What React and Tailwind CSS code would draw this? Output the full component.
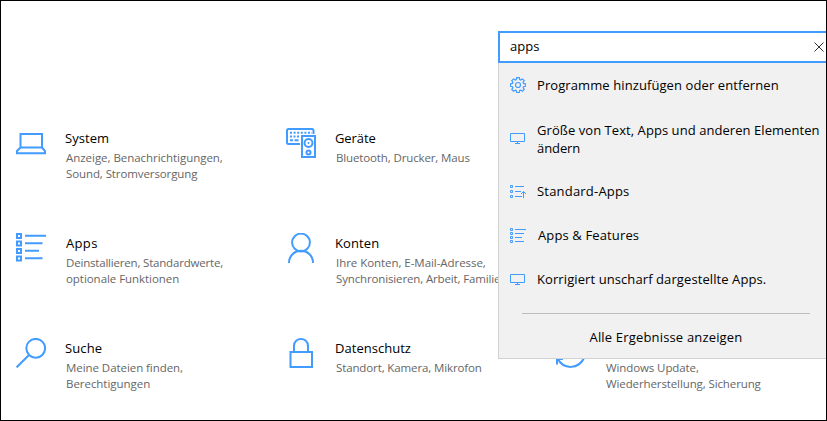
import React from "react";

const Svg = ({ w, h, className = "", children, sw = 2 }) => (
  <svg width={w} height={h} viewBox={`0 0 ${w} ${h}`} fill="none" stroke="#429cff" strokeWidth={sw} className={`block shrink-0 ${className}`}>
    {children}
  </svg>
);

const Laptop = () => (
  <Svg w={30} h={30}>
    <path d="M4.500 6h21.500v13.500H4.500zM4.500 19.500L1 23V25.300h28V23L26 19.500" />
  </Svg>
);

const Devices = () => (
  <Svg w={30} h={30}>
    <path d="M14 16H2.500Q1 16 1 14.500V2.500Q1 1 2.500 1H26Q27.500 1 27.500 2.500V6" />
    <path d="M4 4.700h22" strokeDasharray="2 1.600" />
    <path d="M4 8.500h2M7.500 8.500h2M11 8.500h2M4 12.200h3M8.500 12.200h4" />
    <rect x="16" y="8" width="13" height="21" />
    <circle cx="22.500" cy="15" r="4" />
    <circle cx="22.500" cy="15" r="1" fill="#429cff" stroke="none" />
    <circle cx="22.500" cy="24.500" r="2" />
  </Svg>
);

const AppList = () => (
  <Svg w={30} h={30}>
    <path d="M1 1h4v4h-4zM1 8.500h4v4h-4zM1 16h4v4h-4zM1 23.500h4v4h-4z" />
    <path d="M9 2.800h21M9 10.300h17.500M9 17.800h14M9 25.300h17.500" />
  </Svg>
);

const Person = () => (
  <Svg w={30} h={30}>
    <circle cx="15" cy="9.500" r="8.900" />
    <path d="M3 30C3 13.800 27 13.800 27 30" />
  </Svg>
);

const Magnifier = () => (
  <Svg w={30} h={30}>
    <circle cx="19.700" cy="10.300" r="9.400" />
    <path d="M13 17L.6 29.400" />
  </Svg>
);

const Lock = () => (
  <Svg w={30} h={30}>
    <path d="M4.500 14h21.500v15H4.500zM8 14V8C8-1.300 22-1.300 22 8v6" />
  </Svg>
);

const Sync = () => (
  <Svg w={30} h={30}>
    <path d="M1 15.500C1 7 7 1 15 1C20 1 25 4 27.500 8.500M29 1v8h-8M1.500 20C7 32 23 32 28.500 19M1 26.500V21h6" />
  </Svg>
);

const Gear = () => (
  <Svg w={16} h={16} sw={1.200}>
    <path d="M6.700.6h2.600l.4 2 1 .4 1.700-1.100 1.800 1.800-1.100 1.700.4 1 2 .4v2.500l-2 .4-.4 1 1.100 1.700-1.800 1.800-1.700-1.100-1 .4-.4 2H6.700l-.4-2-1-.4-1.700 1.100-1.800-1.800 1.100-1.700-.4-1-2-.4V6.800l2-.4.4-1-1.100-1.700 1.800-1.800L5.300 3l1-.4z" />
    <circle cx="8" cy="8" r="2.500" />
  </Svg>
);

const Monitor = () => (
  <Svg w={16} h={16} sw={1}>
    <path d="M.5 3.500h14v8H.5zM7.500 11.500v2.500M5 13.500h5" />
  </Svg>
);

const SmallList = () => (
  <Svg w={16} h={16} sw={1}>
    <path d="M.5 1.500h2v2h-2zM.5 5.500h2v2h-2zM.5 9.500h2v2h-2zM.5 13.500h2v2h-2zM5 2.500h11M5 6.500h9M5 10.500h7M5 14.500h9" />
  </Svg>
);

const SortedList = () => (
  <Svg w={16} h={16} sw={1}>
    <path d="M.5 2.500h2v2h-2zM.5 7.500h2v2h-2zM.5 12.500h2v2h-2zM5 3.500h9M5 8.500h6M5 13.500h7M13.500 15V8.500M11 11l2.500-2.500 2.500 2.500" />
  </Svg>
);

const categories = [
  { Icon: Laptop, title: ["System", "tracking-[0.04px]"], lines: [["Anzeige, Benachrichtigungen,", "tracking-[-0.04px]"], ["Sound, Stromversorgung", "tracking-[-0.1px]"]] },
  { Icon: Devices, title: ["Geräte", "tracking-[-0.1px]"], lines: [["Bluetooth, Drucker, Maus", "tracking-[-0.13px]"]] },
  null,
  { Icon: AppList, title: ["Apps", "tracking-[0.35px] pl-px"], lines: [["Deinstallieren, Standardwerte,", "tracking-[-0.19px]"], ["optionale Funktionen", "tracking-[-0.05px]"]] },
  { Icon: Person, title: ["Konten", "tracking-[0.1px]"], lines: [["Ihre Konten, E-Mail-Adresse,", "tracking-[-0.05px]"], ["Synchronisieren, Arbeit, Familie", "tracking-[-0.14px]"]] },
  null,
  { Icon: Magnifier, title: ["Suche", "tracking-[0.1px]"], lines: [["Meine Dateien finden,", "tracking-[-0.06px]"], ["Berechtigungen", "tracking-[-0.04px]"]] },
  { Icon: Lock, title: ["Datenschutz", "tracking-[0.03px]"], lines: [["Standort, Kamera, Mikrofon", "tracking-[-0.12px]"]] },
  { Icon: Sync, title: ["", ""], lines: [["Windows Update,", "tracking-[-0.1px]"], ["Wiederherstellung, Sicherung", "tracking-[-0.11px]"]] },
];

const Category = ({ Icon, title, lines }) => (
  <div className="flex">
    <Icon />
    <div className="ml-[19px] whitespace-nowrap">
      <div className={`mb-0.5 h-5 text-[13px] leading-5 text-black ${title[1]}`}>{title[0]}</div>
      {lines.map(([text, tracking]) => (
        <div key={text} className={`pl-px text-[11.5px] leading-4 text-[#666] ${tracking}`}>{text}</div>
      ))}
    </div>
  </div>
);

const results = [
  { Icon: Gear, height: "h-[44px]", lines: [["Programme hinzufügen oder entfernen", "tracking-[0.09px]"]] },
  { Icon: Monitor, height: "h-[62px]", lines: [["Größe von Text, Apps und anderen Elementen", "tracking-[0.06px]"], ["ändern", "tracking-[-0.09px]"]], offset: "pt-0.5" },
  { Icon: SortedList, height: "h-[44px]", lines: [["Standard-Apps", "tracking-[0.2px]"]] },
  { Icon: SmallList, height: "h-[44px]", lines: [["Apps & Features", "tracking-[0.13px] pl-px"]] },
  { Icon: Monitor, height: "h-[44px]", lines: [["Korrigiert unscharf dargestellte Apps.", "tracking-[0.09px]"]] },
];

export default function App() {
  return (
    <div className="relative h-[421px] w-[827px] overflow-hidden border border-black bg-white font-['Open_Sans',sans-serif]">
      <div className="grid grid-cols-[270px_270px_270px] auto-rows-[105px] pl-[15px] pt-[127px]">
        {categories.map((c, i) => (c ? <Category key={i} {...c} /> : <div key={i} />))}
      </div>

      <div className="absolute left-[497px] top-[30px] w-[328px]">
        <div className="flex h-8 items-center justify-between border-2 border-r-0 border-[#429cff] bg-white pl-[10px] pr-[2px]">
          <span className="text-[13px] text-black">apps</span>
          <svg width="10" height="10" viewBox="0 0 10 10" fill="none" stroke="#333" className="block">
            <path d="M.5.5l9 9M9.500.5l-9 9" />
          </svg>
        </div>
        <div className="h-[296px] border-b border-l border-[#d2d2d2] bg-[#f1f1f1] text-[13px] text-black">
          {results.map(({ Icon, height, lines, offset = "" }, i) => (
            <div key={i} className={`flex items-center pl-[11px] ${height}`}>
              <Icon />
              <div className={`ml-[11px] whitespace-nowrap leading-[18px] ${offset}`}>
                {lines.map(([text, tracking]) => (
                  <div key={text} className={tracking}>{text}</div>
                ))}
              </div>
            </div>
          ))}
          <div className="ml-[23px] mt-3 h-px w-[288px] bg-[#bdbdbd]" />
          <div className="mt-[14px] pl-[7px] text-center leading-[18px] tracking-[0.17px]">Alle Ergebnisse anzeigen</div>
        </div>
      </div>
    </div>
  );
}
